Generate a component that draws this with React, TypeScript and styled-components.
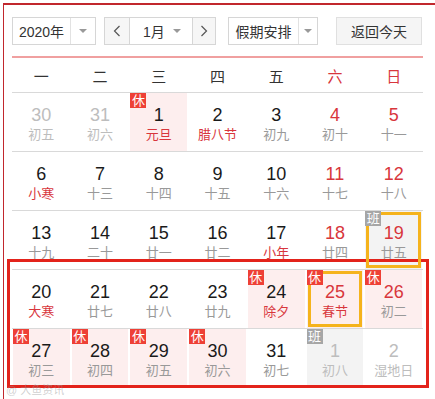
import React from "react";
import styled, { createGlobalStyle } from "styled-components";

const GlobalStyle = createGlobalStyle`
  body {
    margin: 0;
    background: #fff;
    font-family: "Liberation Sans", "Noto Sans CJK SC", sans-serif;
  }
`;

type Tone = "normal" | "red" | "muted";
type Mark = "rest" | "work" | undefined;

interface DayData {
  day: number;
  lunar: string;
  tone?: Tone;
  lunarRed?: boolean;
  mark?: Mark;
  picked?: boolean;
}

const weekdays = ["一", "二", "三", "四", "五", "六", "日"];

const rows: DayData[][] = [
  [
    { day: 30, lunar: "初五", tone: "muted" },
    { day: 31, lunar: "初六", tone: "muted" },
    { day: 1, lunar: "元旦", lunarRed: true, mark: "rest" },
    { day: 2, lunar: "腊八节", lunarRed: true },
    { day: 3, lunar: "初九" },
    { day: 4, lunar: "初十", tone: "red" },
    { day: 5, lunar: "十一", tone: "red" },
  ],
  [
    { day: 6, lunar: "小寒", lunarRed: true },
    { day: 7, lunar: "十三" },
    { day: 8, lunar: "十四" },
    { day: 9, lunar: "十五" },
    { day: 10, lunar: "十六" },
    { day: 11, lunar: "十七", tone: "red" },
    { day: 12, lunar: "十八", tone: "red" },
  ],
  [
    { day: 13, lunar: "十九" },
    { day: 14, lunar: "二十" },
    { day: 15, lunar: "廿一" },
    { day: 16, lunar: "廿二" },
    { day: 17, lunar: "小年", lunarRed: true },
    { day: 18, lunar: "廿四", tone: "red" },
    { day: 19, lunar: "廿五", tone: "red", mark: "work", picked: true },
  ],
  [
    { day: 20, lunar: "大寒", lunarRed: true },
    { day: 21, lunar: "廿七" },
    { day: 22, lunar: "廿八" },
    { day: 23, lunar: "廿九" },
    { day: 24, lunar: "除夕", lunarRed: true, mark: "rest" },
    { day: 25, lunar: "春节", tone: "red", lunarRed: true, mark: "rest", picked: true },
    { day: 26, lunar: "初二", tone: "red", mark: "rest" },
  ],
  [
    { day: 27, lunar: "初三", mark: "rest" },
    { day: 28, lunar: "初四", mark: "rest" },
    { day: 29, lunar: "初五", mark: "rest" },
    { day: 30, lunar: "初六", mark: "rest" },
    { day: 31, lunar: "初七" },
    { day: 1, lunar: "初八", tone: "muted", mark: "work" },
    { day: 2, lunar: "湿地日", tone: "muted" },
  ],
];

export default function App() {
  return (
    <>
      <GlobalStyle />
      <Page>
        <Card>
          <Toolbar>
            <Select width={84} arrowWidth={24} after={8}>
              <SelectText>2020年</SelectText>
              <ArrowBox>
                <Caret />
              </ArrowBox>
            </Select>
            <MonthGroup>
              <NavButton>
                <Chevron dir="left" />
              </NavButton>
              <MonthSelect>
                <MonthText>1月</MonthText>
                <Caret />
              </MonthSelect>
              <NavButton narrow>
                <Chevron dir="right" />
              </NavButton>
            </MonthGroup>
            <Select width={90} arrowWidth={18} after={18}>
              <SelectText>假期安排</SelectText>
              <ArrowBox>
                <Caret />
              </ArrowBox>
            </Select>
            <TodayButton>返回今天</TodayButton>
          </Toolbar>

          <Calendar>
            <WeekHeader>
              {weekdays.map((w, i) => (
                <WeekDay key={w} weekend={i >= 5}>
                  {w}
                </WeekDay>
              ))}
            </WeekHeader>
            <Grid>
              {rows.flat().map((d, i) => (
                <Cell key={i}>
                  <CellBody mark={d.mark}>
                    {d.mark && (
                      <Badge mark={d.mark}>{d.mark === "rest" ? "休" : "班"}</Badge>
                    )}
                    {d.picked && <PickBox />}
                    <DayNum tone={d.tone ?? "normal"}>{d.day}</DayNum>
                    <Lunar tone={d.tone ?? "normal"} red={!!d.lunarRed}>
                      {d.lunar}
                    </Lunar>
                  </CellBody>
                </Cell>
              ))}
            </Grid>
          </Calendar>
        </Card>
        <Highlight />
        <Watermark>@ 大鱼资讯</Watermark>
      </Page>
    </>
  );
}

function Chevron({ dir }: { dir: "left" | "right" }) {
  return (
    <svg width="8" height="12" viewBox="0 0 8 12">
      <path
        d={dir === "left" ? "M6.5 1 L1.5 6 L6.5 11" : "M1.5 1 L6.5 6 L1.5 11"}
        fill="none"
        stroke="#555"
        strokeWidth="1.2"
      />
    </svg>
  );
}

const Page = styled.div`
  position: relative;
  width: 435px;
  height: 399px;
  overflow: hidden;
  padding: 3px 0 0 3px;
  box-sizing: border-box;
`;

const Card = styled.div`
  border-top: 2px solid #c1272d;
  border-left: 1px solid #c1272d;
  padding: 12px 0 0 8px;
  height: 100%;
  box-sizing: border-box;
`;

const Toolbar = styled.div`
  display: flex;
  align-items: center;
  height: 28px;
  font-size: 14px;
  color: #333;
`;

const Select = styled.div<{ width: number; arrowWidth: number; after: number }>`
  width: ${(p) => p.width}px;
  height: 28px;
  box-sizing: border-box;
  border: 1px solid #d6d6d6;
  display: grid;
  grid-template-columns: 1fr ${(p) => p.arrowWidth}px;
  margin-right: ${(p) => p.after}px;
  background: #fff;
`;

const SelectText = styled.span`
  display: flex;
  align-items: center;
  justify-content: center;
  border-right: 1px solid #e2e2e2;
  color: #333;
`;

const ArrowBox = styled.span`
  display: flex;
  align-items: center;
  justify-content: center;
`;

const Caret = styled.span`
  width: 0;
  height: 0;
  border-left: 4px solid transparent;
  border-right: 4px solid transparent;
  border-top: 4px solid #999;
`;

const MonthGroup = styled.div`
  display: flex;
  height: 28px;
  box-sizing: border-box;
  border: 1px solid #d6d6d6;
  margin-right: 12px;
`;

const NavButton = styled.div<{ narrow?: boolean }>`
  width: ${(p) => (p.narrow ? 22 : 24)}px;
  background: #f6f6f6;
  display: flex;
  align-items: center;
  justify-content: center;
`;

const MonthSelect = styled.div`
  width: 64px;
  box-sizing: border-box;
  border-left: 1px solid #d6d6d6;
  border-right: 1px solid #d6d6d6;
  background: #fff;
  display: flex;
  align-items: center;
  padding: 0 11px 0 13px;
  justify-content: space-between;
`;

const MonthText = styled.span`
  color: #333;
`;

const TodayButton = styled.div`
  width: 86px;
  height: 28px;
  box-sizing: border-box;
  border: 1px solid #e0e0e0;
  background: #f5f5f5;
  display: flex;
  align-items: center;
  justify-content: center;
  color: #333;
`;

const Calendar = styled.div`
  width: 411px;
  margin-top: 11px;
  border-top: 2px solid #f0a0a0;
`;

const WeekHeader = styled.div`
  display: grid;
  grid-template-columns: repeat(7, 1fr);
  height: 34px;
  border-bottom: 1px solid #d9d9d9;
`;

const WeekDay = styled.div<{ weekend: boolean }>`
  display: flex;
  align-items: center;
  justify-content: center;
  font-size: 15px;
  color: ${(p) => (p.weekend ? "#d8363c" : "#333")};
`;

const Grid = styled.div`
  display: grid;
  grid-template-columns: repeat(7, 1fr);
`;

const Cell = styled.div`
  height: 59px;
  box-sizing: border-box;
  border-bottom: 1px solid #d9d9d9;
`;

const CellBody = styled.div<{ mark: Mark }>`
  position: relative;
  height: 100%;
  margin: 0 1px;
  display: flex;
  flex-direction: column;
  align-items: center;
  padding-top: 11px;
  box-sizing: border-box;
  background: ${(p) =>
    p.mark === "rest" ? "#fdeeee" : p.mark === "work" ? "#f3f3f3" : "transparent"};
`;

const Badge = styled.span<{ mark: Mark }>`
  position: absolute;
  left: 0;
  top: 0;
  width: 16px;
  height: 15px;
  line-height: 15px;
  text-align: center;
  font-size: 13px;
  color: #fff;
  background: ${(p) => (p.mark === "rest" ? "#ee4036" : "#a6a6a6")};
  z-index: 2;
`;

const PickBox = styled.span`
  position: absolute;
  left: 1px;
  right: 1px;
  top: 1px;
  bottom: 1px;
  border: 3px solid #f5b31c;
  z-index: 1;
`;

const numColor = (t: Tone) => (t === "red" ? "#d8363c" : t === "muted" ? "#bdbdbd" : "#1a1a1a");

const DayNum = styled.span<{ tone: Tone }>`
  font-size: 18px;
  line-height: 22px;
  color: ${(p) => numColor(p.tone)};
`;

const Lunar = styled.span<{ tone: Tone; red: boolean }>`
  margin-top: 1px;
  font-size: 13px;
  line-height: 16px;
  color: ${(p) => (p.red ? "#d8363c" : p.tone === "muted" ? "#bdbdbd" : "#999")};
`;

const Highlight = styled.div`
  position: absolute;
  left: 7px;
  top: 259px;
  width: 422px;
  height: 129px;
  box-sizing: border-box;
  border: 3px solid #e3231b;
  pointer-events: none;
`;

const Watermark = styled.div`
  position: absolute;
  left: 6px;
  top: 381px;
  font-size: 11px;
  color: rgba(150, 150, 150, 0.45);
`;
